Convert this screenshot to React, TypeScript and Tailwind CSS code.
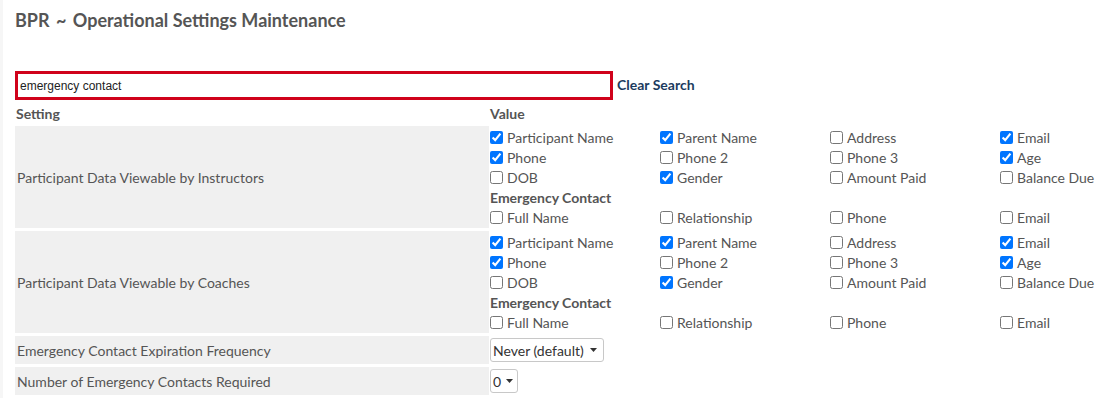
const fields = [
  ["Participant Name", "Parent Name", "Address", "Email"],
  ["Phone", "Phone 2", "Phone 3", "Age"],
  ["DOB", "Gender", "Amount Paid", "Balance Due"],
];
const checked = ["Participant Name", "Parent Name", "Email", "Phone", "Age", "Gender"];
const emergency = ["Full Name", "Relationship", "Phone", "Email"];

function Check({ label, on }: { label: string; on?: boolean }) {
  return (
    <label className="flex items-center h-5 whitespace-nowrap">
      <input
        type="checkbox"
        defaultChecked={on}
        className="w-[13px] h-[13px] m-0 mr-[4px] shrink-0"
      />
      <span>{label}</span>
    </label>
  );
}

function FieldGrid() {
  return (
    <div className="pt-px pb-px">
      <div className="grid grid-cols-[170px_170px_170px_auto]">
        {fields.flat().map((f) => (
          <Check key={f} label={f} on={checked.includes(f)} />
        ))}
      </div>
      <div className="h-5 flex items-center font-bold">Emergency Contact</div>
      <div className="grid grid-cols-[170px_170px_170px_auto]">
        {emergency.map((f) => (
          <Check key={f} label={f} />
        ))}
      </div>
    </div>
  );
}

function FakeSelect({ value, wide }: { value: string; wide?: boolean }) {
  return (
    <div
      className={
        wide
          ? "inline-flex items-center h-6 border border-[#c8c8c8] rounded-[3px] bg-white pl-[2px] pr-[6px] gap-[6px] text-[#333]"
          : "inline-flex items-center h-6 border border-[#c8c8c8] rounded-[3px] bg-white pl-[2px] pr-[4px] gap-[5px] text-[#333]"
      }
    >
      <span>{value}</span>
      <svg width="7" height="4" viewBox="0 0 7 4">
        <path d="M0 0h7L3.5 4z" fill="#333" />
      </svg>
    </div>
  );
}

export default function App() {
  return (
    <div className="min-h-screen bg-white border-l-[3px] border-[#f6f6f6] font-['Lato',sans-serif] text-[14px] text-[#555]">
      <div className="pl-[12px] pt-[8px]">
        <h1 className="text-[18px] leading-6 font-bold text-[#555]">
          BPR <span className="mx-[2px]">~</span> Operational Settings Maintenance
        </h1>

        <div className="mt-[39px] flex items-center gap-[4px]">
          <div className="w-[598px] h-[29px] border-[3px] border-[#d0021b] flex items-center px-[2px]">
            <input
              defaultValue="emergency contact"
              className="w-full outline-none font-['Liberation_Sans',Arial,sans-serif] text-[12px] text-[#222]"
            />
          </div>
          <a href="#" className="font-bold text-[#1c3b5e] pb-[2px]">
            Clear Search
          </a>
        </div>

        <div className="mt-[3px] grid grid-cols-[474px_1fr] gap-x-px gap-y-[3px]">
          <div className="h-5 flex items-center pl-px font-bold">Setting</div>
          <div className="h-5 flex items-center font-bold">Value</div>

          <div className="bg-[#f0f0f0] flex items-center pl-[2px]">
            Participant Data Viewable by Instructors
          </div>
          <FieldGrid />

          <div className="bg-[#f0f0f0] flex items-center pl-[2px]">
            Participant Data Viewable by Coaches
          </div>
          <FieldGrid />

          <div className="bg-[#f0f0f0] h-7 flex items-center pl-[2px]">
            Emergency Contact Expiration Frequency
          </div>
          <div className="flex items-center">
            <FakeSelect value="Never (default)" wide />
          </div>

          <div className="bg-[#f0f0f0] h-7 flex items-center pl-[2px]">
            Number of Emergency Contacts Required
          </div>
          <div className="flex items-center">
            <FakeSelect value="0" />
          </div>
        </div>
      </div>
    </div>
  );
}
